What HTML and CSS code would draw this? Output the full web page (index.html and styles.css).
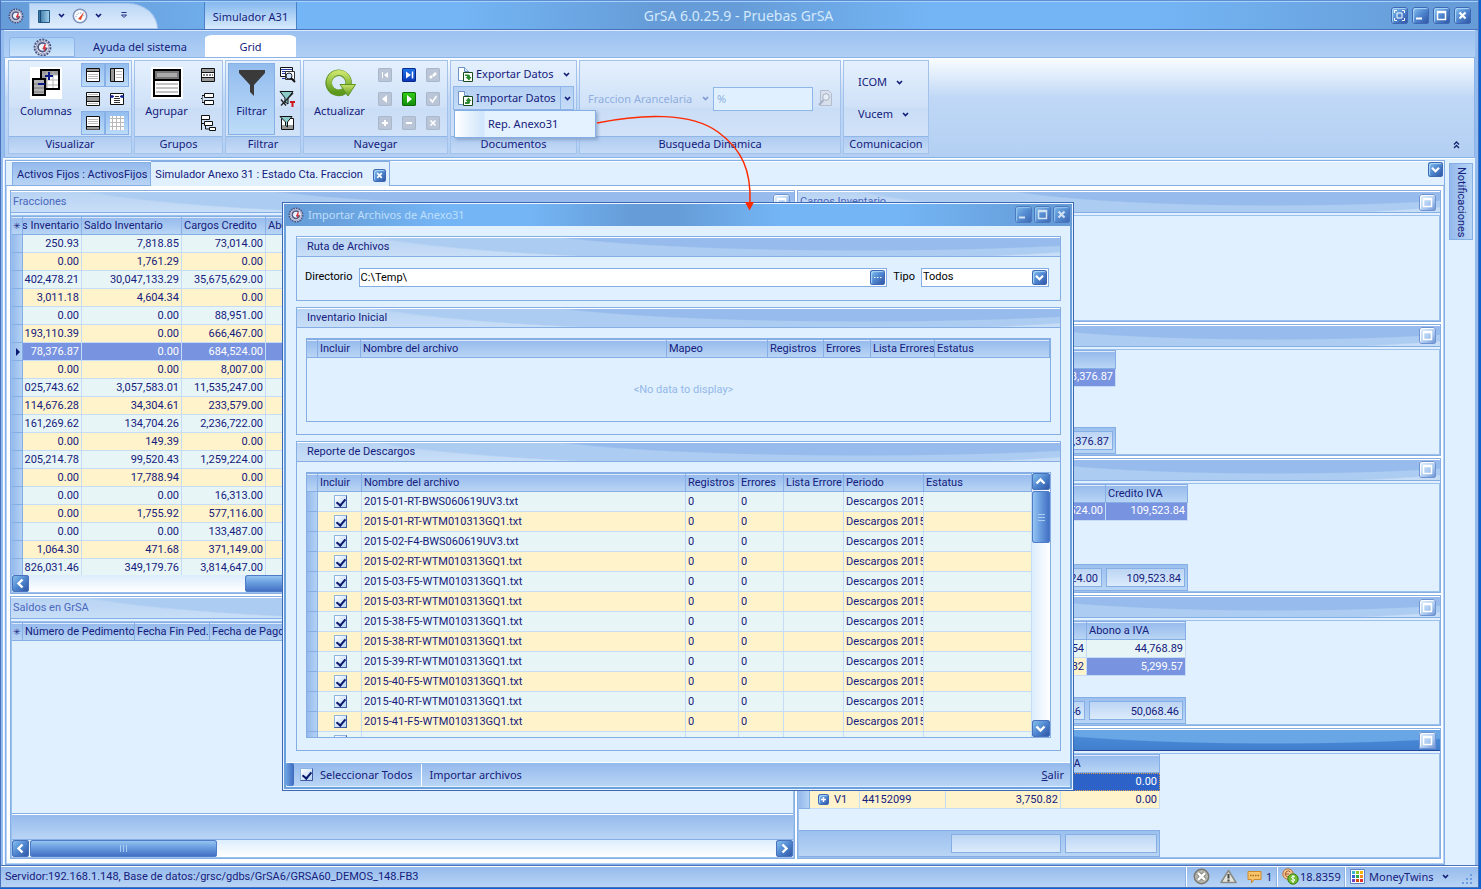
FILE: index.html
```html
<!DOCTYPE html>
<html lang="es">
<head>
<meta charset="utf-8">
<title>GrSA 6.0.25.9 - Pruebas GrSA</title>
<link rel="stylesheet" href="styles.css">
</head>
<body>
<svg class="defs" aria-hidden="true">
  <defs>
    <linearGradient id="gGreen" x2="0" y2="1"><stop offset="0" stop-color="#c9e36a"/><stop offset="1" stop-color="#5c9a1c"/></linearGradient>
    <linearGradient id="gBook" x2="1"><stop offset="0" stop-color="#2d6d9c"/><stop offset="1" stop-color="#a6d3ee"/></linearGradient>
    <symbol id="logo" viewBox="0 0 16 16"><circle cx="8" cy="8" r="6.7" fill="#dde4f2" stroke="#4b5383" stroke-width="1.6" stroke-dasharray="1.7 .9"/><circle cx="8" cy="8" r="5.4" fill="#eef2fa" stroke="#77809f" stroke-width=".6"/><path d="M10.6 5.2A3.7 3.7 0 1 0 11.4 9H8.2" fill="none" stroke="#4f5888" stroke-width="1.5"/><path d="M9.6 5.5 8 9h1.600l-.6 3L11.500 7.800H10l1.200-2.300z" fill="#e2363c"/></symbol>
    <symbol id="chev" viewBox="0 0 7 5"><path d="M1 1l2.500 2.500L6 1" fill="none" stroke="currentColor" stroke-width="1.700"/></symbol>
    <symbol id="max" viewBox="0 0 17 17"><path d="M4.500 4.500h8v8h-8zM4.500 5.500h8" fill="none" stroke="#fff" stroke-width="1.500"/></symbol>
    <symbol id="x" viewBox="0 0 17 17"><path d="M5.500 5.500l6 6M11.500 5.500l-6 6" stroke="#fff" stroke-width="2.200"/></symbol>
    <symbol id="min" viewBox="0 0 17 17"><path d="M4 11.500h6" stroke="#fff" stroke-width="2"/></symbol>
    <symbol id="down" viewBox="0 0 17 17"><path d="M4.500 6.500l4 4 4-4" fill="none" stroke="#fff" stroke-width="2.400"/></symbol>
    <symbol id="left" viewBox="0 0 17 17"><path d="M10.500 4.500l-4 4 4 4" fill="none" stroke="#fff" stroke-width="2.400"/></symbol>
    <symbol id="doc" viewBox="0 0 17 17"><path d="M1.500 1.500h6l4 4v9h-10z" fill="#fff" stroke="#6d93c8"/><path d="M7.500 1.500v4h4" fill="#d6e6fa" stroke="#6d93c8"/><path d="M6.500 6.500h9v9h-9z" fill="#fff" stroke="#1c4a1c"/></symbol>
  </defs>
</svg>

<div class="window">
  <header class="titlebar">
    <svg class="logo" width="16" height="16"><use href="#logo"/></svg>
    <div class="quick">
      <button aria-label="Libro"><svg width="14" height="14"><path d="M1.500 1.500h11v12h-11z" fill="url(#gBook)" stroke="#235a85"/><path d="M3.500 1v13" stroke="#184a75"/></svg></button>
      <button aria-label="Opciones de libro"><svg width="7" height="5"><use href="#chev"/></svg></button>
      <button aria-label="Tablero"><svg width="16" height="16"><circle cx="8" cy="8" r="6.700" fill="#fff" stroke="#7f93bd" stroke-width="1.600"/><path d="M4 9a4 4 0 0 1 8 0" fill="none" stroke="#5f8fcf" stroke-dasharray="1 1"/><path d="M6 11l6-7-3 8z" fill="#e34a25"/></svg></button>
      <button aria-label="Opciones de tablero"><svg width="7" height="5"><use href="#chev"/></svg></button>
      <button aria-label="Personalizar" class="more"><svg width="8" height="7"><path d="M1.500 .5h5M1.500 3l2.500 2.500L6.500 3z" fill="#dcebfc" stroke="#1c2f80"/></svg></button>
    </div>
    <div class="context">Simulador A31</div>
    <h1>GrSA 6.0.25.9 - Pruebas GrSA</h1>
    <div class="winbtns">
      <button class="glass" aria-label="Pantalla completa"><svg width="17" height="17"><path d="M6 6h5v5H6z" fill="none" stroke="#fff"/><path d="M3.500 6V3.500H6M11 3.500h2.500V6M13.500 11v2.500H11M6 13.500H3.500V11" fill="none" stroke="#fff"/></svg></button>
      <button class="glass" aria-label="Minimizar"><svg width="17" height="17"><use href="#min"/></svg></button>
      <button class="glass" aria-label="Maximizar"><svg width="17" height="17"><use href="#max"/></svg></button>
      <button class="glass" aria-label="Cerrar"><svg width="17" height="17"><use href="#x"/></svg></button>
    </div>
  </header>

  <nav class="tabs">
    <button class="app" aria-label="GrSA"><svg width="19" height="19"><use href="#logo"/></svg></button>
    <button class="rtab">Ayuda del sistema</button>
    <button class="rtab on">Grid</button>
  </nav>

  <div class="ribbon">
    <section class="group g-vis">
      <div class="body">
        <button class="big"><svg width="32" height="32"><path fill="#fff" d="M0 0h32v32H0z"/><path d="M11 3h18v19H11z" fill="#fff" stroke="#000" stroke-width="2"/><path d="M12 4h16v4H12zM12 4h5v17h-5z" fill="#9b9b9b"/><path d="M17 4v17M23 4v17M12 8h16M12 13h16M12 18h16" stroke="#b5b5b5"/><path d="M3 12h12v16H3z" fill="#b4b4b4" stroke="#000" stroke-width="2"/><path d="M4 17h10M4 21h10M4 25h10" stroke="#777"/><path d="M19 5v8M15 9h8M8 17h7" stroke="#0b1a85" stroke-width="2"/></svg><span>Columnas</span></button>
        <div class="mini two">
          <button class="hot" aria-label="Encabezado"><svg width="16" height="16"><path d="M1.500 1.500h13v13h-13z" fill="#fff" stroke="#111"/><path d="M2 3h12" stroke="#999" stroke-width="2"/><path d="M1 4.500h14" stroke="#111"/><path d="M3 7.500h10M3 9.500h10M3 11.500h10" stroke="#bbb"/></svg></button>
          <button class="hot" aria-label="Indicador"><svg width="16" height="16"><path d="M1.500 1.500h13v13h-13z" fill="#fff" stroke="#111"/><path d="M3.500 2v12" stroke="#999" stroke-width="3"/><path d="M5.500 1v14" stroke="#111"/><path d="M7 4.500h6M7 7.500h6M7 10.500h6" stroke="#bbb"/></svg></button>
          <button aria-label="Filas"><svg width="16" height="16"><path d="M1.500 1.500h13v13h-13z" fill="#fff" stroke="#111"/><path d="M2 8h12" stroke="#999" stroke-width="4"/><path d="M1 5.500h14M1 10.500h14" stroke="#111"/><path d="M3 3.500h10M3 12.500h10" stroke="#bbb"/></svg></button>
          <button aria-label="Ajustar ancho"><svg width="16" height="16"><path d="M1.500 2.500h13v11h-13z" fill="#fff" stroke="#111"/><path d="M6 5.500h4M5 7.500h6M5 9.500h6M5 11.500h6" stroke="#333"/><path d="M1 5.500h4M11 5.500h4M3 4v3M13 4v3" stroke="#12209a" stroke-width="1.500"/></svg></button>
          <button class="hot" aria-label="Pie"><svg width="16" height="16"><path d="M1.500 1.500h13v13h-13z" fill="#fff" stroke="#111"/><path d="M3 4.500h10M3 6.500h10M3 8.500h10" stroke="#bbb"/><path d="M2 13h12" stroke="#999" stroke-width="3"/><path d="M1 11.500h14" stroke="#111"/></svg></button>
          <button class="hot" aria-label="Cuadrícula"><svg width="16" height="16"><path d="M1 1h14v14H1z" fill="#fff"/><path d="M3.500 1v14M7.500 1v14M11.500 1v14M1 3.500h14M1 7.500h14M1 11.500h14" stroke="#b9b9b9"/></svg></button>
        </div>
      </div>
      <h2>Visualizar</h2>
    </section>

    <section class="group g-grp">
      <div class="body">
        <button class="big"><svg width="32" height="32"><path fill="#fff" d="M0 0h32v32H0z"/><path d="M3 3h26v26H3z" fill="#fff" stroke="#000" stroke-width="2"/><path d="M4 4h24v8H4z" fill="#777"/><path d="M6 6h20v4H6z" fill="#aaa"/><path d="M3 13h26" stroke="#000" stroke-width="2"/><path d="M5 17h22M5 21h22M5 25h22" stroke="#c4c4c4" stroke-width="2"/></svg><span>Agrupar</span></button>
        <div class="mini">
          <button aria-label="Fila de grupo"><svg width="16" height="16"><path d="M1.500 1.500h13v13h-13z" fill="#fff" stroke="#111"/><path d="M2 3.500h12M2 12.500h12" stroke="#999" stroke-width="3"/><path d="M1 5.500h14M1 10.500h14" stroke="#111"/><path d="M3 8h10" stroke="#111" stroke-dasharray="2 1"/></svg></button>
          <button aria-label="Expandir"><svg width="16" height="16"><path d="M4.500 2.500h9v4h-9zM4.500 9.500h9v4h-9z" fill="#fff" stroke="#111"/><path d="M4 4.500H2M4 11.500H2M2.500 7.500H1" stroke="#111"/><path d="M2.500 5v6" stroke="#777"/></svg></button>
          <button aria-label="Contraer"><svg width="17" height="17"><path d="M1.500 1.500h8v4h-8zM4.500 7.500h8v4h-8zM9.500 13.500h6v3h-6z" fill="#fff" stroke="#111"/><path d="M1.500 5v11M1 9.500h3M5.500 11v4h4" fill="none" stroke="#111"/></svg></button>
        </div>
      </div>
      <h2>Grupos</h2>
    </section>

    <section class="group g-fil">
      <div class="body">
        <button class="big hot"><svg width="32" height="32"><path d="M3 3h26v3L18 18v11l-4-4v-7L3 6z" fill="#3a3a3a"/></svg><span>Filtrar</span></button>
        <div class="mini">
          <button aria-label="Buscar"><svg width="17" height="17"><path d="M1.500 1.500h12v9h-12z" fill="#fff" stroke="#111"/><path d="M2 3.500h11M3 5.500h4M3 7.500h3M3 12.500h5" stroke="#2336a8"/><path d="M6.500 5.500h9v8h-9z" fill="#fff" stroke="#333"/><circle cx="10" cy="10" r="3" fill="#cfe6fa" stroke="#223"/><path d="M12 12l4 4" stroke="#111" stroke-width="2"/></svg></button>
          <button aria-label="Quitar filtro"><svg width="17" height="17"><path d="M1 1.500h13L9 8v6l-3-2V8z" fill="#8ccaca" stroke="#111"/><path d="M2 15.500L14 3M2 9.500l5 6" stroke="#222" stroke-width="1.300"/><path d="M13.500 11v6M11 12h5" stroke="#d0181c" stroke-width="2"/></svg></button>
          <button aria-label="Filtro de fila"><svg width="16" height="16"><path d="M2.500 3.500h12v11h-12z" fill="#fff" stroke="#111"/><path d="M3 12h11" stroke="#999" stroke-width="4"/><path d="M1 1.500h12L8.500 7v5l-2-1.500V7z" fill="#8ccaca" stroke="#111"/></svg></button>
        </div>
      </div>
      <h2>Filtrar</h2>
    </section>

    <section class="group g-nav">
      <div class="body">
        <button class="big"><svg width="32" height="32"><path d="M20.500 24A10 10 0 1 1 24.500 14V18" fill="none" stroke="#5d9422" stroke-width="6.500"/><path d="M20 23.500A9.700 9.700 0 1 1 24.500 14V18" fill="none" stroke="url(#gGreen)" stroke-width="5"/><path d="M16 17.500h15.500L24 29z" fill="url(#gGreen)" stroke="#5d9422"/></svg><span>Actualizar</span></button>
        <div class="mini three">
          <button class="nb" aria-label="Primero" disabled><svg width="14" height="14"><path d="M4.500 4v6" stroke="#fff"/><path d="M10 4v6L6 7z" fill="#fff"/></svg></button>
          <button class="nb blue" aria-label="Último"><svg width="14" height="14"><path d="M10.500 3.500v7" stroke="#fff" stroke-width="1.500"/><path d="M4 3.500v7L9 7z" fill="#fff"/></svg></button>
          <button class="nb" aria-label="Editar" disabled><svg width="14" height="14"><path d="M4 10l2-2M7 8l3-3" stroke="#fff" stroke-width="2.500"/></svg></button>
          <button class="nb" aria-label="Anterior" disabled><svg width="14" height="14"><path d="M9 3v8L4 7z" fill="#fff"/></svg></button>
          <button class="nb green" aria-label="Siguiente"><svg width="14" height="14"><path d="M5 3v8l5-4z" fill="#fff"/></svg></button>
          <button class="nb" aria-label="Aceptar" disabled><svg width="14" height="14"><path d="M4 7l2.500 3L10.500 4" fill="none" stroke="#fff" stroke-width="1.500"/></svg></button>
          <button class="nb" aria-label="Agregar" disabled><svg width="14" height="14"><path d="M7 4v6M4 7h6" stroke="#fff" stroke-width="2"/></svg></button>
          <button class="nb" aria-label="Eliminar" disabled><svg width="14" height="14"><path d="M4 7h6" stroke="#fff" stroke-width="2"/></svg></button>
          <button class="nb" aria-label="Cancelar" disabled><svg width="14" height="14"><path d="M4.500 4.500l5 5M9.500 4.500l-5 5" stroke="#fff" stroke-width="1.700"/></svg></button>
        </div>
      </div>
      <h2>Navegar</h2>
    </section>

    <section class="group g-doc">
      <div class="body">
        <div class="split"><button><svg width="17" height="17"><use href="#doc"/><path d="M8 8.500h3c2 0 2 1 2 2.500h1.500L12 14.500 8.500 11H10V10H8z" fill="#2c8a2c"/></svg>Exportar Datos</button><button class="arrow" aria-label="Opciones de exportar"><svg width="7" height="5"><use href="#chev"/></svg></button></div>
        <div class="split open"><button><svg width="17" height="17"><use href="#doc"/><path d="M8 14h3c2 0 2-1 2-3h1.500L11.500 7.500 8.500 11H10v1H8z" fill="#2c8a2c"/></svg>Importar Datos</button><button class="arrow" aria-label="Opciones de importar"><svg width="7" height="5"><use href="#chev"/></svg></button>
          <div class="menu"><button>Rep. Anexo31</button></div>
        </div>
      </div>
      <h2>Documentos</h2>
    </section>

    <section class="group g-bus">
      <div class="body">
        <label for="frac">Fraccion Arancelaria</label>
        <svg class="dim" width="7" height="5"><use href="#chev"/></svg>
        <input id="frac" type="text" value="%">
        <svg width="16" height="17"><path d="M2.500 .5h8l3 3v12h-11z" fill="#d8dfea" stroke="#b1bdd0"/><circle cx="8" cy="7" r="3.300" fill="#e8eef6" stroke="#a4b0c4"/><path d="M5.500 10L1 15" stroke="#a4b0c4" stroke-width="2"/></svg>
      </div>
      <h2>Busqueda Dinamica</h2>
    </section>

    <section class="group g-com">
      <div class="body">
        <button>ICOM <svg width="7" height="5"><use href="#chev"/></svg></button>
        <button>Vucem <svg width="7" height="5"><use href="#chev"/></svg></button>
      </div>
      <h2>Comunicacion</h2>
    </section>
    <button class="collapse" aria-label="Contraer cinta"><svg width="7" height="8"><path d="M1 3.500L3.500 1 6 3.500M1 7l2.500-2.500L6 7" fill="none" stroke="#14246e" stroke-width="1.300"/></svg></button>
    <svg class="callout" width="170" height="100"><path d="M6 23C50 14 100 12 127 32C152 50 160 72 159 102" fill="none" stroke="#ff2a00" stroke-width="1.500"/></svg>
  </div>

  <main class="work">
    <div class="docs">
      <div class="doctabs">
        <button class="dtab">Activos Fijos : ActivosFijos</button>
        <div class="dtab on"><button>Simulador Anexo 31 : Estado Cta. Fraccion</button><button class="glass sm" aria-label="Cerrar pestaña"><svg width="13" height="13" viewBox="0 0 17 17"><use href="#x"/></svg></button></div>
        <span class="fill"></span>
        <button class="glass md" aria-label="Lista de pestañas"><svg width="15" height="15" viewBox="0 0 17 17"><use href="#down"/></svg></button>
      </div>
      <div class="cols">
        <div class="lcol">
          <section class="panel">
            <header><h3>Fracciones</h3><button class="glass pale" aria-label="Maximizar Fracciones"><svg width="17" height="17"><use href="#max"/></svg></button></header>
            <div class="pbody">
              <div class="clip">
              <table class="grid main">
                <colgroup><col class="w11"><col class="w59"><col class="w100"><col class="w84"><col></colgroup>
                <thead><tr><th>✳</th><th class="cut"><span>s Inventario</span></th><th>Saldo Inventario</th><th>Cargos Credito</th><th>Abono Credito</th></tr></thead>
                <tbody>
                <tr><td><td class="cut"><span>250.93</span><td>7,818.85<td>73,014.00<td>
                <tr><td><td class="cut"><span>0.00</span><td>1,761.29<td>0.00<td>
                <tr><td><td class="cut"><span>402,478.21</span><td>30,047,133.29<td>35,675,629.00<td>
                <tr><td><td class="cut"><span>3,011.18</span><td>4,604.34<td>0.00<td>
                <tr><td><td class="cut"><span>0.00</span><td>0.00<td>88,951.00<td>
                <tr><td><td class="cut"><span>193,110.39</span><td>0.00<td>666,467.00<td>
                <tr class="sel"><td><svg width="4" height="8"><path d="M0 0l4 4-4 4z" fill="#0b1a6e"/></svg><td class="cut"><span>78,376.87</span><td>0.00<td>684,524.00<td>
                <tr><td><td class="cut"><span>0.00</span><td>0.00<td>8,007.00<td>
                <tr><td><td class="cut"><span>025,743.62</span><td>3,057,583.01<td>11,535,247.00<td>
                <tr><td><td class="cut"><span>114,676.28</span><td>34,304.61<td>233,579.00<td>
                <tr><td><td class="cut"><span>161,269.62</span><td>134,704.26<td>2,236,722.00<td>
                <tr><td><td class="cut"><span>0.00</span><td>149.39<td>0.00<td>
                <tr><td><td class="cut"><span>205,214.78</span><td>99,520.43<td>1,259,224.00<td>
                <tr><td><td class="cut"><span>0.00</span><td>17,788.94<td>0.00<td>
                <tr><td><td class="cut"><span>0.00</span><td>0.00<td>16,313.00<td>
                <tr><td><td class="cut"><span>0.00</span><td>1,755.92<td>577,116.00<td>
                <tr><td><td class="cut"><span>0.00</span><td>0.00<td>133,487.00<td>
                <tr><td><td class="cut"><span>1,064.30</span><td>471.68<td>371,149.00<td>
                <tr><td><td class="cut"><span>826,031.46</span><td>349,179.76<td>3,814,647.00<td>
                </tbody>
              </table>
              </div>
              <div class="hscroll"><button class="sb" aria-label="Desplazar a la izquierda"><svg width="17" height="17"><use href="#left"/></svg></button><span class="gap"></span><span class="thumb"></span></div>
            </div>
          </section>

          <section class="panel">
            <header><h3>Saldos en GrSA</h3></header>
            <div class="pbody">
              <div class="clip">
              <table class="grid main">
                <colgroup><col class="w11"><col class="w112"><col class="w75"><col></colgroup>
                <thead><tr><th>✳</th><th>Número de Pedimento</th><th>Fecha Fin Ped.</th><th>Fecha de Pago</th></tr></thead>
              </table>
              </div>
              <div class="gfoot"></div>
              <div class="hscroll"><button class="sb" aria-label="Desplazar a la izquierda"><svg width="17" height="17"><use href="#left"/></svg></button><span class="thumb"><svg width="7" height="7"><path d="M.5 0v7M3.500 0v7M6.500 0v7" stroke="#a8cbf4"/></svg></span><span class="gap"></span><button class="sb" aria-label="Desplazar a la derecha"><svg class="flip" width="17" height="17"><use href="#left"/></svg></button></div>
            </div>
          </section>
        </div>

        <div class="rcol">
          <section class="panel">
            <header><h3>Cargos Inventario</h3><button class="glass pale" aria-label="Maximizar Cargos Inventario"><svg width="17" height="17"><use href="#max"/></svg></button></header>
            <div class="pbody"></div>
          </section>
          <section class="panel">
            <header><button class="glass pale" aria-label="Maximizar panel"><svg width="17" height="17"><use href="#max"/></svg></button></header>
            <div class="pbody">
              <table class="grid t2"><thead><tr><th></th></tr></thead><tbody><tr class="sel"><td>78,376.87</td></tr></tbody></table>
              <div class="sums t2"><output>78,376.87</output></div>
            </div>
          </section>
          <section class="panel">
            <header><button class="glass pale" aria-label="Maximizar panel"><svg width="17" height="17"><use href="#max"/></svg></button></header>
            <div class="pbody">
              <table class="grid t3"><colgroup><col><col class="w82"></colgroup><thead><tr><th></th><th>Credito IVA</th></tr></thead><tbody><tr class="sel"><td>684,524.00</td><td>109,523.84</td></tr></tbody></table>
              <div class="sums t3"><output>684,524.00</output><output class="last">109,523.84</output></div>
            </div>
          </section>
          <section class="panel">
            <header><button class="glass pale" aria-label="Maximizar panel"><svg width="17" height="17"><use href="#max"/></svg></button></header>
            <div class="pbody">
              <table class="grid t4"><colgroup><col><col class="w99"></colgroup><thead><tr><th></th><th>Abono a IVA</th></tr></thead><tbody><tr><td>54</td><td>44,768.89</td></tr><tr><td>32</td><td class="pick">5,299.57</td></tr></tbody></table>
              <div class="sums t4"><output>46</output><output class="last">50,068.46</output></div>
            </div>
          </section>
          <section class="panel active">
            <header><button class="glass pale" aria-label="Maximizar panel"><svg width="17" height="17"><use href="#max"/></svg></button></header>
            <div class="pbody">
              <table class="grid t5"><colgroup><col class="w11"><col class="w50"><col class="w86"><col class="w115"><col></colgroup><thead><tr><th></th><th></th><th></th><th></th><th>IVA</th></tr></thead><tbody>
              <tr class="focus"><td></td><td></td><td></td><td></td><td>0.00</td></tr>
              <tr><td></td><td class="txt"><button class="glass plus" aria-label="Expandir fila"><svg width="11" height="11"><path d="M5.500 3v5M3 5.500h5" stroke="#fff" stroke-width="1.500"/></svg></button>V1</td><td class="txt">44152099</td><td>3,750.82</td><td>0.00</td></tr></tbody></table>
              <div class="sums t5"><output></output><output class="last"></output></div>
            </div>
          </section>
        </div>
      </div>
    </div>
    <aside><button>Notificaciones</button></aside>
  </main>

  <footer class="status">
    <span class="srv">Servidor:192.168.1.148, Base de datos:/grsc/gdbs/GrSA6/GRSA60_DEMOS_148.FB3</span>
    <div class="cell c1">
      <svg width="17" height="17"><circle cx="8.500" cy="8.500" r="7.200" fill="#b9b9b3" stroke="#77776f" stroke-width="1.400"/><path d="M5 5l7 7M12 5l-7 7" stroke="#6e6e66" stroke-width="4"/><path d="M5 5l7 7M12 5l-7 7" stroke="#fff" stroke-width="2.600"/></svg>
      <svg width="17" height="15"><path d="M8.500 1.500L16 13.500H1z" fill="#e4e4de" stroke="#8b8b85" stroke-width="1.500" stroke-linejoin="round"/><path d="M8.500 5v4.500M8.500 10.500v2" stroke="#444" stroke-width="2"/></svg>
      <span class="msg"><svg width="15" height="14"><path d="M1 1.500h13v8H7L4.500 13V9.500H1z" fill="#f7c56c" stroke="#cc8a2c"/><path d="M3 5.500h9" stroke="#b06c17" stroke-width="1.500" stroke-dasharray="1.500 1"/></svg>1</span>
    </div>
    <div class="cell c2"><svg width="17" height="17"><circle cx="6" cy="6" r="5.200" fill="#f3c79b" stroke="#b9713a"/><path d="M8.500 4a3 3 0 1 0 0 4M3 6h4" fill="none" stroke="#a85a24"/><circle cx="11" cy="11" r="5.200" fill="#6dbb2e" stroke="#3c7d14"/><path d="M13 9c-1.500-1.500-4-.5-3.500.8s3.500.8 3.300 2.300-2.800 1.500-4 .2M11 7v8" fill="none" stroke="#fff"/></svg>18.8359</div>
    <div class="cell c3"><svg width="15" height="15"><path d="M.5.5h14v14H.5z" fill="#fff" stroke="#5f83c8"/><path d="M2 2h3v3H2z" fill="#39b7c9"/><path d="M6 2h3v3H6z" fill="#8ac926"/><path d="M10 2h3v3h-3z" fill="#f5b400"/><path d="M2 6h3v3H2z" fill="#2f62d9"/><path d="M6 6h3v3H6z" fill="#29a745"/><path d="M10 6h3v3h-3z" fill="#f08a1d"/><path d="M2 10h3v3H2z" fill="#6f42c1"/><path d="M6 10h3v3H6z" fill="#d9480f"/><path d="M10 10h3v3h-3z" fill="#e0312f"/></svg><button>MoneyTwins <svg width="7" height="5"><use href="#chev"/></svg></button>
    <svg class="grip" width="11" height="11"><path d="M9 0h2v2H9zM9 4h2v2H9zM9 8h2v2H9zM5 4h2v2H5zM5 8h2v2H5zM1 8h2v2H1z" fill="#6d9be0"/></svg></div>
  </footer>
</div>

<div class="dialog" role="dialog" aria-labelledby="dlg">
  <header><svg width="16" height="16"><use href="#logo"/></svg><h2 id="dlg">Importar Archivos de Anexo31</h2>
    <button class="glass low" aria-label="Minimizar diálogo"><svg width="17" height="17"><use href="#min"/></svg></button><button class="glass low" aria-label="Maximizar diálogo"><svg width="17" height="17"><use href="#max"/></svg></button><button class="glass low" aria-label="Cerrar diálogo"><svg width="17" height="17"><use href="#x"/></svg></button></header>
  <div class="dbody">
    <section class="box">
      <h3>Ruta de Archivos</h3>
      <div class="form">
        <label for="dir">Directorio</label>
        <div class="field wide"><input id="dir" type="text" value="C:\Temp\"><button class="glass md" aria-label="Examinar"><svg width="15" height="15"><path d="M4 7.500h1.500M7 7.500h1.500M10 7.500h1.500" stroke="#fff"/></svg></button></div>
        <label for="tipo">Tipo</label>
        <div class="field type"><select id="tipo"><option>Todos</option></select><span class="glass md"><svg width="15" height="15" viewBox="0 0 17 17"><use href="#down"/></svg></span></div>
      </div>
    </section>
    <section class="box">
      <h3>Inventario Inicial</h3>
      <div class="inset short">
        <table class="grid">
          <colgroup><col class="w11"><col class="w43"><col><col class="w101"><col class="w56"><col class="w47"><col class="w64"><col class="w115"></colgroup>
          <thead><tr><th></th><th>Incluir</th><th>Nombre del archivo</th><th>Mapeo</th><th>Registros</th><th>Errores</th><th>Lista Errores</th><th>Estatus</th></tr></thead>
        </table>
        <p>&lt;No data to display&gt;</p>
      </div>
    </section>
    <section class="box">
      <h3>Reporte de Descargos</h3>
      <div class="inset tall">
        <div class="view">
        <table class="grid files">
          <colgroup><col class="w11"><col class="w44"><col><col class="w53"><col class="w45"><col class="w60"><col class="w80"><col class="w108"></colgroup>
          <thead><tr><th></th><th>Incluir</th><th>Nombre del archivo</th><th>Registros</th><th>Errores</th><th>Lista Errore</th><th>Periodo</th><th>Estatus</th></tr></thead>
          <tbody>
          <tr><td><td><input type="checkbox" checked aria-label="Incluir 1"><td>2015-01-RT-BWS060619UV3.txt<td>0<td>0<td><td>Descargos 2015<td>
          <tr><td><td><input type="checkbox" checked aria-label="Incluir 2"><td>2015-01-RT-WTM010313GQ1.txt<td>0<td>0<td><td>Descargos 2015<td>
          <tr><td><td><input type="checkbox" checked aria-label="Incluir 3"><td>2015-02-F4-BWS060619UV3.txt<td>0<td>0<td><td>Descargos 2015<td>
          <tr><td><td><input type="checkbox" checked aria-label="Incluir 4"><td>2015-02-RT-WTM010313GQ1.txt<td>0<td>0<td><td>Descargos 2015<td>
          <tr><td><td><input type="checkbox" checked aria-label="Incluir 5"><td>2015-03-F5-WTM010313GQ1.txt<td>0<td>0<td><td>Descargos 2015<td>
          <tr><td><td><input type="checkbox" checked aria-label="Incluir 6"><td>2015-03-RT-WTM010313GQ1.txt<td>0<td>0<td><td>Descargos 2015<td>
          <tr><td><td><input type="checkbox" checked aria-label="Incluir 7"><td>2015-38-F5-WTM010313GQ1.txt<td>0<td>0<td><td>Descargos 2015<td>
          <tr><td><td><input type="checkbox" checked aria-label="Incluir 8"><td>2015-38-RT-WTM010313GQ1.txt<td>0<td>0<td><td>Descargos 2015<td>
          <tr><td><td><input type="checkbox" checked aria-label="Incluir 9"><td>2015-39-RT-WTM010313GQ1.txt<td>0<td>0<td><td>Descargos 2015<td>
          <tr><td><td><input type="checkbox" checked aria-label="Incluir 10"><td>2015-40-F5-WTM010313GQ1.txt<td>0<td>0<td><td>Descargos 2015<td>
          <tr><td><td><input type="checkbox" checked aria-label="Incluir 11"><td>2015-40-RT-WTM010313GQ1.txt<td>0<td>0<td><td>Descargos 2015<td>
          <tr><td><td><input type="checkbox" checked aria-label="Incluir 12"><td>2015-41-F5-WTM010313GQ1.txt<td>0<td>0<td><td>Descargos 2015<td>
          <tr><td><td><input type="checkbox" checked aria-label="Incluir 13"><td><td><td><td><td><td>
          </tbody>
        </table>
        </div>
        <div class="vscroll"><button class="sb" aria-label="Subir"><svg class="flip" width="17" height="17"><use href="#down"/></svg></button><span class="thumb"><svg width="7" height="7"><path d="M0 .5h7M0 3.500h7M0 6.500h7" stroke="#a8cbf4"/></svg></span><span class="gap"></span><button class="sb" aria-label="Bajar"><svg width="17" height="17"><use href="#down"/></svg></button></div>
      </div>
    </section>
  </div>
  <div class="dfoot">
    <span class="handle"></span>
    <label><input type="checkbox" checked>Seleccionar Todos</label>
    <button class="imp">Importar archivos</button>
    <span class="fill"></span>
    <button><u>S</u>alir</button>
  </div>
  <svg class="tip" width="10" height="9"><path d="M0 0h9L4.500 8.500z" fill="#ff2a00"/></svg>
</div>
</body>
</html>
```
FILE: styles.css
```css
:root {
  --navy: #14207c;
  --line: #84aee4;
  --paper: #e0f0fe;
  --bar: linear-gradient(#94b9ec, #b9d5f5);
  --title: linear-gradient(90deg, #669dd8 0, #69a2de 7%, #74b5f5 20%, #74b5f5 31%, #669dd8 44%, #669dd8 50%, #74b5f5 63%, #74b5f5 78%, #669dd8 97%);
  --swoosh:
    radial-gradient(ellipse 46% 26px at 74% -12px, #96bbec 96%, transparent),
    radial-gradient(ellipse 60% 40px at 64% -16px, #acccf1 97%, transparent),
    linear-gradient(#b8d3f3, #c8def7);
  --grid-font: Roboto, "Liberation Sans", sans-serif;
  --ui-font: "Noto Sans", "Open Sans", sans-serif;
}
* { box-sizing: border-box; }
body { margin: 0; height: 100vh; overflow: hidden; position: relative; background: #0a62d0; color: var(--navy); font: 11px/14px var(--grid-font); white-space: nowrap; }
button, input, select { font: inherit; color: inherit; margin: 0; padding: 0; border: 0; background: none; }
h1, h2, h3, p { margin: 0; font: inherit; }
svg { display: block; flex: none; }
.defs { position: absolute; width: 0; height: 0; }
.fill { flex: 1; }

.window { height: calc(100vh - 1px); margin-right: 2px; display: flex; flex-direction: column; border: 1px solid #4a72bc; border-top-color: #5b8fd4; background: #94bcef; }

.titlebar { height: 29px; flex: none; display: flex; align-items: center; background: var(--title); border-top: 1px solid #a8d0f8; font: 11px/16px var(--ui-font); border-bottom: 1px solid #4a72bc; }
.titlebar .logo { margin: 0 5px 0 7px; }
.quick { width: 129px; height: 26px; display: flex; align-items: center; gap: 7px; padding-left: 7px; background: linear-gradient(#bcd7f6, #e0edfc); border: 1px solid #a5c6ef; border-radius: 0 30px 0 0 / 0 26px 0 0; }
.quick .more { margin-left: 11px; }
.context { width: 93px; align-self: stretch; margin-left: 46px; padding-top: 7px; text-align: center; border: solid #4a80c8; border-width: 0 1px; background: linear-gradient(#84b8ef, #d9ebfc); }
.titlebar h1 { flex: 1; padding-right: 211px; text-align: center; font-size: 14px; color: #d4e9fc; }
.winbtns { display: flex; gap: 4px; margin-right: 7px; }
.glass { width: 17px; height: 17px; flex: none; display: grid; place-items: center; border-radius: 3px; background: linear-gradient(135deg, #8cc8f2, #4f86cf 50%, #2c4f9f); box-shadow: inset 0 0 0 1px #3f68b4, inset 1px 1px 1px 1px #a9d8f8; }
.glass.low { opacity: .7; }
.glass.sm { width: 13px; height: 13px; }
.glass.md { width: 15px; height: 15px; }
.glass.pale { background: linear-gradient(135deg, #e4f3fe, #a9c8f0 60%, #6a8dd0); box-shadow: inset 0 0 0 1px #6f93d2, inset 1px 1px 1px 1px #fff; }

.tabs { height: 27px; flex: none; display: flex; align-items: flex-end; background: linear-gradient(#9cc2f1, #b0cff4); font: 11px/16px var(--ui-font); border-top: 1px solid #dcecfd; margin: 0 3px; padding-left: 5px; }
.app { width: 66px; height: 20px; display: grid; place-items: center; overflow: hidden; border: 1px solid #8db5e8; border-radius: 3px 3px 0 0; background: linear-gradient(#a9d0f6, #cfe5fb); }
.rtab { width: 130px; height: 22px; padding-top: 2px; }
.rtab.on { width: 91px; background: #fff; border-radius: 8px 8px 0 0 / 3px 3px 0 0; }

.ribbon { position: relative; height: 101px; flex: none; display: flex; gap: 2px; margin: 0 3px; padding: 2px 3px 3px; border: 1px solid #8cb3e8; background: linear-gradient(#fafdff, #c0d8f6 40%, #b2cff3); font: 11px/16px var(--ui-font); box-shadow: 0 1px 0 #fff; }
.group { height: 94px; display: flex; flex-direction: column; border: 1px solid #a2c2ec; background: linear-gradient(#e4f0fd, #cfe1f8 50%, #c9ddf6 51%, #d6e6fa); }
.group h2 { height: 17px; flex: none; line-height: 14px; text-align: center; border-top: 1px solid #8fb6e8; background: linear-gradient(#aecbf0, #c6dcf7); }
.body { flex: 1; display: flex; align-items: center; padding: 1px 2px; }
.g-vis { width: 124px; } .g-grp { width: 89px; } .g-fil { width: 76px; } .g-nav { width: 145px; } .g-doc { width: 127px; } .g-bus { width: 262px; } .g-com { width: 86px; }
.big { flex: 1; height: 72px; display: flex; flex-direction: column; align-items: center; gap: 4px; padding-top: 4px; }
.g-fil .big { flex: none; width: 47px; }
.hot { background: linear-gradient(#92bcee, #bedcf9); box-shadow: inset 0 0 0 1px #86b0e6; }
.mini { display: grid; grid-template-columns: 24px; grid-auto-rows: 24px; }
.mini.two { grid-template-columns: 24px 24px; }
.mini.three { grid-template-columns: 24px 24px 24px; }
.mini button { display: grid; place-items: center; }
.mini .nb { width: 14px; height: 14px; place-self: center; border-radius: 2px; background: #bac6d8; box-shadow: inset 0 0 0 1px #a9b7cd; }
.mini .nb.blue { background: linear-gradient(#1f78f0, #0a35b5); box-shadow: inset 0 0 0 1px #0a2a8a; }
.mini .nb.green { background: linear-gradient(#35cf1a, #128a08); box-shadow: inset 0 0 0 1px #0c6a08; }
.g-doc .body { flex-direction: column; align-items: stretch; justify-content: flex-start; }
.split { position: relative; height: 24px; display: flex; border: 1px solid transparent; }
.split button { display: flex; align-items: center; gap: 2px; padding-left: 3px; flex: 1; }
.split .arrow { flex: none; width: 13px; }
.split.open { background: linear-gradient(#b4d0f3, #c6dcf7); border-color: #8fb6e8; }
.split.open .arrow { border-left: 1px solid #8fb6e8; }
.menu { position: absolute; z-index: 3; left: 0; top: 23px; width: 142px; height: 28px; background: linear-gradient(90deg, #fff 0, #cfe5fb 29px, #e4f1fe 30px); border: 1px solid #84aee4; box-shadow: 2px 2px 3px #6c86b088; }
.menu button { height: 100%; padding-left: 33px; }
.g-bus .body { padding-left: 8px; }
.g-bus label { color: #90aee0; flex: 1; }
.g-bus .dim { color: #7f9bd0; margin: 0 4px 0 3px; }
.g-bus input { width: 100px; height: 24px; padding: 0 3px; border: 1px solid #8fb6e8; background: var(--paper); color: #8fb0e0; margin-right: 5px; }
.g-bus .body > svg:last-child { margin-right: 4px; }
.g-com .body { flex-direction: column; align-items: flex-start; padding: 9px 0 0 14px; gap: 8px; }
.g-com .body button { height: 24px; display: flex; align-items: center; gap: 9px; }
.collapse { margin-left: auto; align-self: flex-end; padding: 0 11px 5px 0; }
.callout { position: absolute; z-index: 4; left: 586px; top: 42px; overflow: visible; pointer-events: none; }

.work { flex: 1; min-height: 0; display: flex; gap: 3px; margin: 0 3px 0 2px; padding: 2px 0 0 1px; background: var(--paper); border-left: 1px solid #fff; }
.docs { flex: 1; min-width: 0; display: flex; flex-direction: column; border: 1px solid var(--line); box-shadow: inset 0 1px 0 #fff; }
.doctabs { height: 25px; flex: none; display: flex; align-items: flex-end; border-bottom: 1px solid var(--line); padding: 0 1px 0 6px; }
.dtab { height: 23px; padding: 2px 3px 0 4px; background: var(--bar); border: 1px solid var(--line); border-bottom: 0; }
.dtab.on { height: 25px; margin-bottom: -1px; background: var(--paper); display: flex; align-items: center; gap: 10px; border-left: 0; }
.doctabs > .glass { margin-bottom: 8px; }
.cols { flex: 1; min-height: 0; display: grid; grid-template-columns: 785fr 644fr; gap: 2px; padding: 4px 2px 4px 3px; border: 1px solid #b3d0f5; border-top: 0; background: #fff; }
.lcol { display: grid; grid-template-rows: 404fr 263fr; gap: 2px; min-height: 0; min-width: 0; }
.rcol { display: grid; grid-template-rows: 132fr 132fr 136fr 131fr 131fr; gap: 2px; min-height: 0; min-width: 0; }
.panel { min-height: 0; min-width: 0; display: flex; flex-direction: column; border: 1px solid var(--line); background: var(--paper); }
.panel > header { height: 22px; flex: none; display: flex; align-items: center; justify-content: space-between; padding: 0 4px 0 2px; background: var(--swoosh); border-top: 1px solid #fff; border-bottom: 1px solid var(--line); color: #4a68bd; }
.panel > header .glass { margin-left: auto; }
.panel.active > header { background: radial-gradient(ellipse 46% 26px at 74% -12px, #68a6e5 96%, transparent), linear-gradient(#4c8edb, #417fcd); border-bottom-color: #27479c; }
.pbody { flex: 1; min-height: 0; margin-top: 2px; border: 1px solid #9cc0ee; display: flex; flex-direction: column; align-items: flex-start; }
.clip { flex: 1; min-height: 0; width: 100%; overflow: hidden; }

.grid { border-spacing: 0; table-layout: fixed; width: 100%; flex: none; }
.grid th { height: 19px; padding: 1px 0 0 2px; text-align: left; font-weight: 400; overflow: hidden; background: var(--bar); border: solid var(--line); border-width: 1px 1px 1px 0; box-shadow: inset 0 1px 0 #ffffffb0; }
.grid td { height: 18px; padding: 0 2px; line-height: 16px; text-align: right; overflow: hidden; background: #e8f5f6; border: solid #c6dcf6; border-width: 0 1px 1px 0; }
.grid tr:nth-child(even) td { background: #fff3cc; }
.grid tr.sel td { background: #7893e0; color: #fff; }
.main td:first-child, .files td:first-child, .t5 td:first-child { background: linear-gradient(90deg, #94b9ec, #b4d2f4) !important; padding: 0 0 0 4px; border-color: var(--line); }
.main th:first-child { padding: 0; text-align: center; font-size: 9px; }
.cut { padding: 0 2px 0 0 !important; }
.cut span { display: flex; justify-content: flex-end; overflow: hidden; }
.grid .pick { background: #7893e0 !important; color: #fff; }
.grid tr.focus td { background: #2d63c8; color: #fff; border: 1px dotted #e0a050; }
.grid .txt { text-align: left; }
.plus { width: 11px; height: 11px; display: inline-grid; vertical-align: -2px; margin: 0 5px 0 6px; }
.w11 { width: 11px; } .w43 { width: 43px; } .w44 { width: 44px; } .w45 { width: 45px; } .w47 { width: 47px; } .w50 { width: 50px; } .w53 { width: 53px; } .w56 { width: 56px; } .w59 { width: 59px; } .w60 { width: 60px; } .w64 { width: 64px; } .w75 { width: 75px; } .w80 { width: 80px; } .w82 { width: 82px; } .w84 { width: 84px; } .w86 { width: 86px; } .w99 { width: 99px; } .w100 { width: 100px; } .w101 { width: 101px; } .w108 { width: 108px; } .w112 { width: 112px; } .w115 { width: 115px; }
.t2 { width: 317px; } .t3 { width: 389px; } .t4 { width: 387px; } .t5 { width: 361px; }
.t5 th:last-child { padding-left: 3px; }
.sums { margin-top: auto; height: 27px; flex: none; display: flex; justify-content: flex-end; gap: 4px; padding: 3px 2px 3px 0; background: linear-gradient(#9cc0ee, #b9d5f5); border: 1px solid var(--line); border-left: 0; }
.sums output { width: 120px; padding-right: 3px; line-height: 19px; text-align: right; background: linear-gradient(#bcd5f4, #dcebfc); border: 1px solid var(--line); }
.t3 .last { width: 79px; } .t4 .last { width: 94px; } .t5 .last { width: 92px; }
.t5 output { width: 110px; }
.gfoot { height: 27px; flex: none; width: 100%; background: var(--bar); border: solid var(--line); border-width: 1px 0; box-shadow: inset 0 1px 0 #fff; }
.hscroll { height: 17px; flex: none; width: 100%; display: flex; background: linear-gradient(#dcedfd, #fff); }
.hscroll .thumb { width: 187px; margin-left: 1px; }
.panel:first-child .hscroll .thumb { width: 548px; }
.gap { flex: 1; }
.thumb { display: grid; place-items: center; border-radius: 3px; background: linear-gradient(#9dcbf3, #6ea2e2 40%, #3f6bc0); box-shadow: inset 0 0 0 1px #4f7cc8; }
.sb { width: 17px; height: 17px; border-radius: 3px; background: linear-gradient(135deg, #8cc8f2, #4f86cf 50%, #2c4f9f); box-shadow: inset 0 0 0 1px #4a72bc; }
.flip { transform: rotate(180deg); }

aside { padding: 3px 0 0 1px; width: 27px; }
aside button { width: 24px; height: 77px; padding: 3px 3px 0; writing-mode: vertical-rl; text-align: left; border: 1px solid var(--line); background: linear-gradient(90deg, #94b9ec, #b9d5f5); }

.status { height: 22px; flex: none; display: flex; align-items: center; padding-left: 4px; background: var(--bar); border-top: 1px solid #4a72bc; box-shadow: inset 0 1px 0 #fff; }
.srv { flex: 1; }
.cell { height: 20px; display: flex; align-items: center; border-left: 1px solid #fff; box-shadow: -1px 0 0 #8db3e6; font: 11px/16px var(--ui-font); }
.c1 { width: 91px; padding-left: 6px; gap: 10px; }
.msg { display: flex; gap: 4px; align-items: center; }
.c2 { width: 68px; padding-left: 4px; gap: 1px; }
.c3 { width: 133px; padding-left: 4px; gap: 4px; }
.c3 button { display: flex; align-items: center; gap: 9px; }
.grip { margin: 6px 0 0 8px; }

.dialog { position: absolute; left: 282px; top: 202px; width: 792px; background: var(--paper); border: 1px solid #3f68b4; box-shadow: inset 0 0 0 1px #e8f4ff, inset 0 0 0 3px #6aa0dc; padding: 1px 3px 4px 3px; }
.dialog > header { height: 22px; display: flex; align-items: center; gap: 2px; margin: 0 -2px; padding: 0 2px 1px 4px; background: var(--title); font: 11px/16px var(--ui-font); color: #bfdffc; }
.dialog > header h2 { flex: 1; padding-left: 2px; }
.dbody { display: flex; flex-direction: column; gap: 6px; padding: 10px 9px 11px 10px; }
.box { border: 1px solid var(--line); }
.box h3 { height: 20px; padding: 0 10px; line-height: 20px; background: var(--swoosh); border-bottom: 1px solid var(--line); box-shadow: inset 0 1px 0 #fff; }
.form { display: flex; align-items: center; gap: 6px; height: 43px; padding: 0 11px 3px 8px; color: #000; }
.field { height: 19px; display: flex; align-items: center; border: 1px solid var(--line); background: #fff; padding-right: 1px; }
.field input, .field select { flex: 1; min-width: 0; height: 17px; padding-left: 1px; appearance: none; outline: 0; }
.wide { flex: 1; }
.type { width: 128px; }
.inset { margin: 10px 9px 12px; border: 1px solid var(--line); }
.short { height: 84px; }
.short p { text-align: center; line-height: 64px; padding-left: 10px; color: #94b8ea; }
.tall { height: 266px; display: flex; }
.view { flex: 1; min-width: 0; overflow: hidden; }
.files td { height: 20px; text-align: left; line-height: 18px; padding-top: 1px; }
.files td:nth-child(2) { padding: 0 0 0 16px; }
input[type="checkbox"] { appearance: none; display: block; width: 13px; height: 13px; border: 1px solid; border-color: #8eb4e0 #3f5aa0 #3f5aa0 #8eb4e0; background: linear-gradient(135deg, #fff, #b4d2f4); }
input[type="checkbox"]:checked::after { content: ""; display: block; width: 4px; height: 7px; margin: 1px 0 0 3px; border: solid #0b1a6e; border-width: 0 2px 2px 0; transform: rotate(40deg); }
.vscroll { width: 18px; display: flex; flex-direction: column; align-items: stretch; background: linear-gradient(90deg, #dcedfd, #fff); }
.vscroll .sb { width: 18px; }
.vscroll .thumb { height: 52px; margin-top: 1px; background: linear-gradient(90deg, #9dcbf3, #6ea2e2 40%, #3f6bc0); }
.dfoot { height: 24px; display: flex; align-items: center; background: var(--bar); border-top: 1px solid #fff; font: 11px/16px var(--ui-font); padding-right: 6px; }
.handle { width: 8px; align-self: stretch; border-radius: 2px; background: linear-gradient(90deg, #6aa0e0, #3f6bc0); }
.dfoot label { display: flex; align-items: center; gap: 7px; padding: 0 9px 0 6px; border-right: 1px solid #fff; height: 22px; }
.imp { padding-left: 7px; }
.tip { position: absolute; z-index: 5; left: 462px; top: -1px; }
```
